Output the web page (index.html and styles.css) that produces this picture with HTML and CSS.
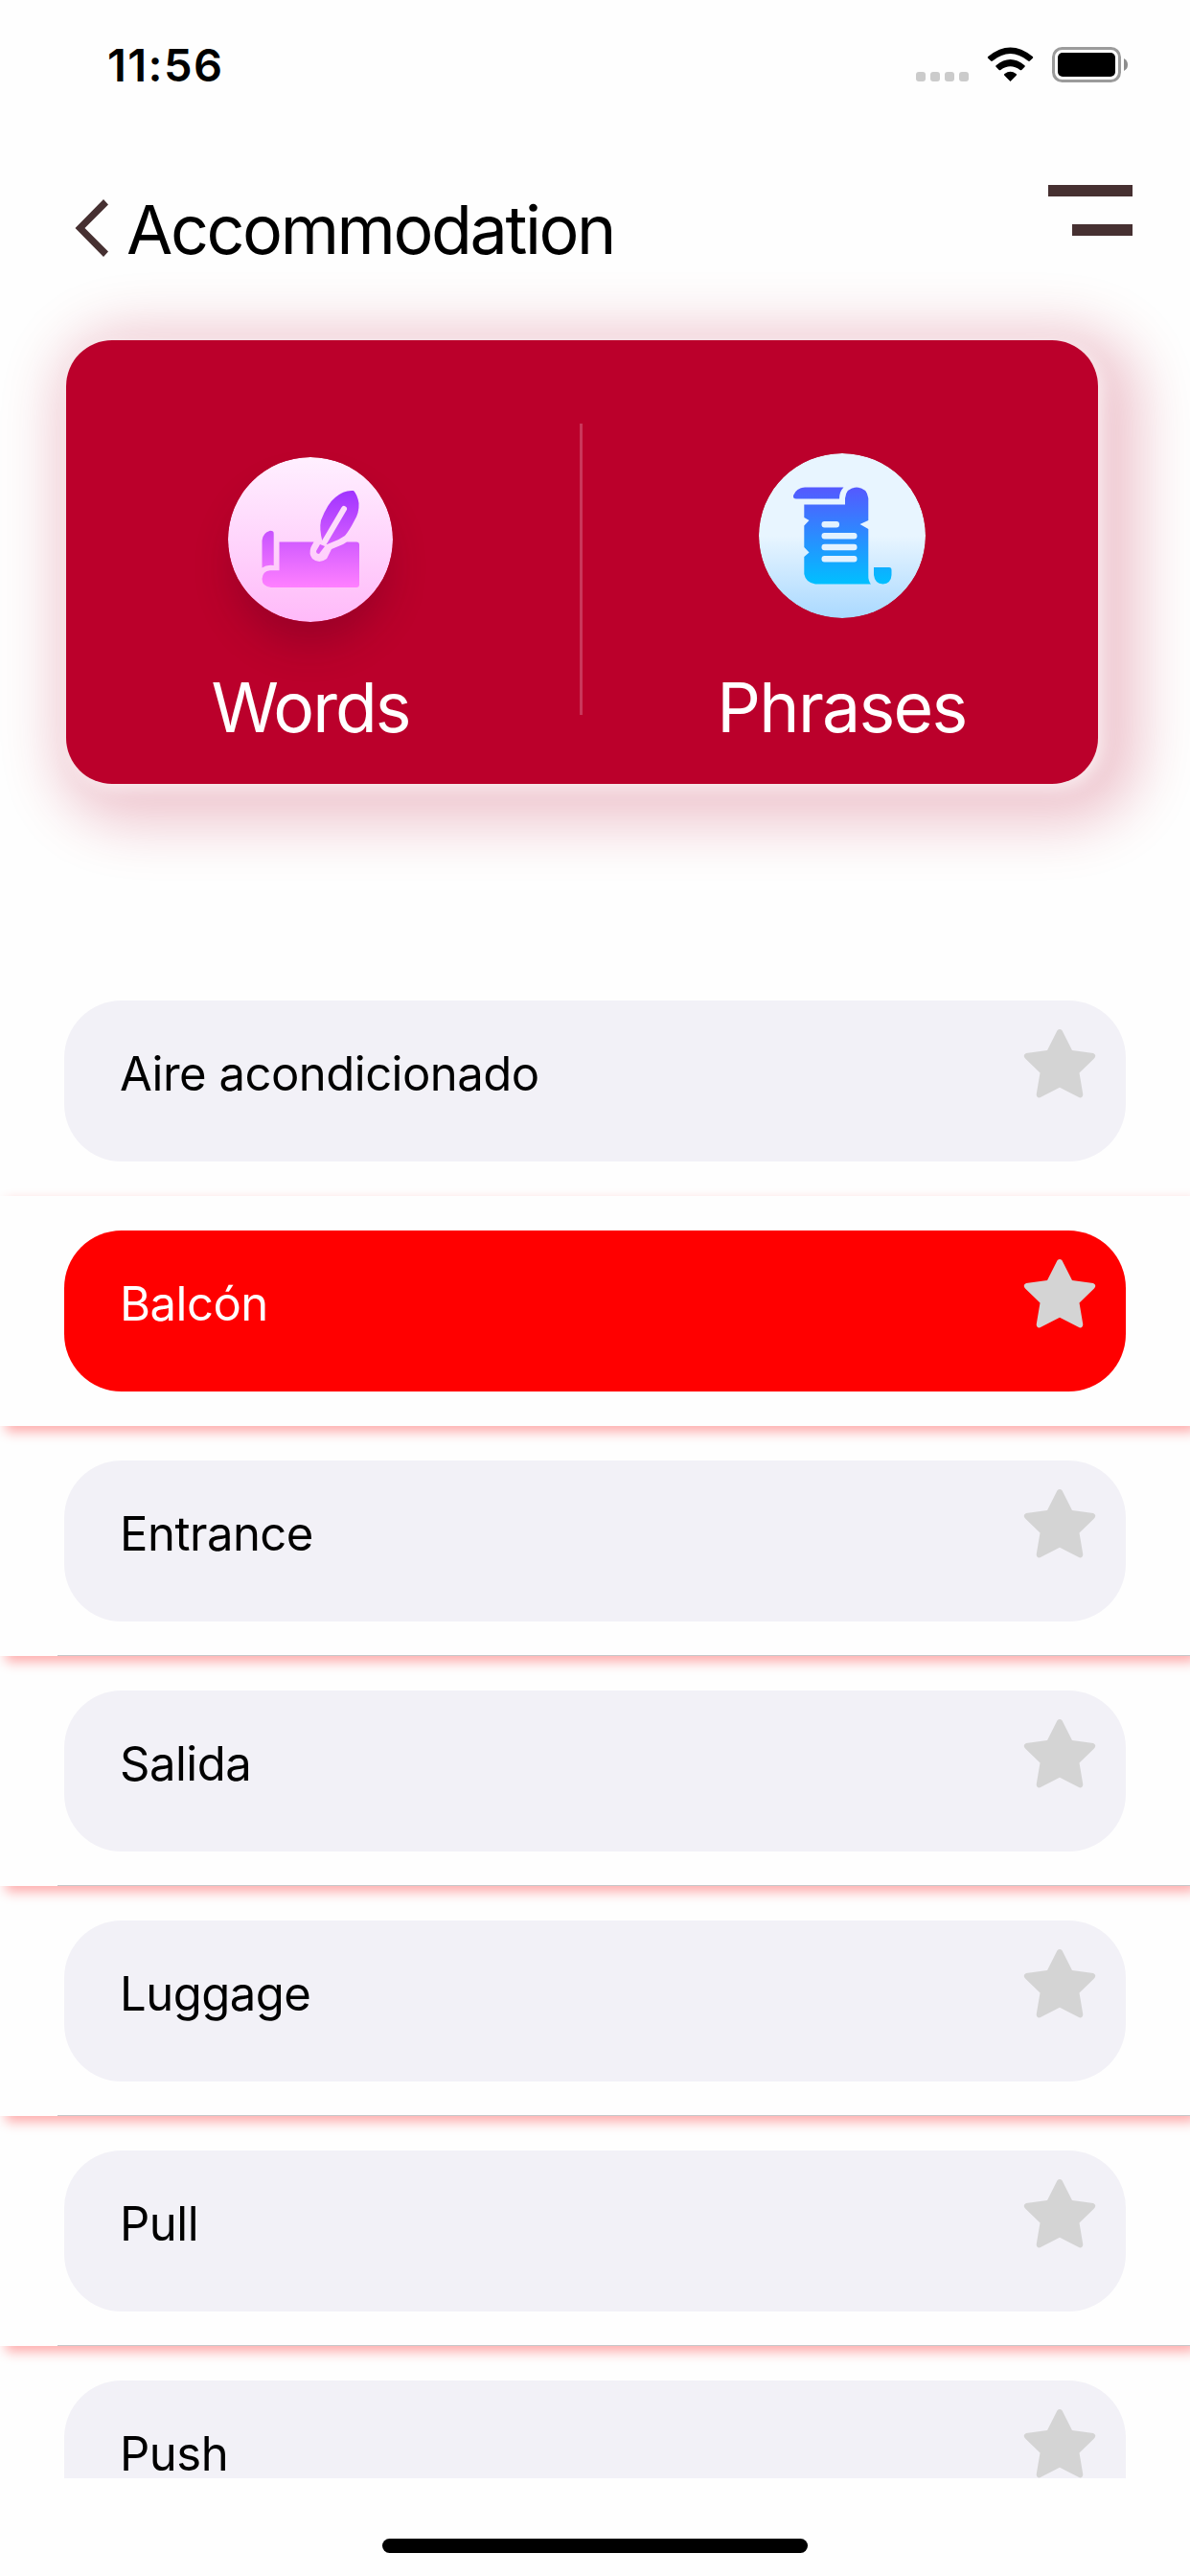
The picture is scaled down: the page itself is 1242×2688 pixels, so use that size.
FILE: index.html
```html
<!DOCTYPE html>
<html lang="en">
<head>
<meta charset="utf-8">
<title>Accommodation</title>
<link rel="stylesheet" href="styles.css">
</head>
<body>
<div class="screen">
  <header class="status">
    <span class="time">11:56</span>
    <svg class="status-icons" width="222" height="40" viewBox="0 0 222 40">
      <g fill="#cbcbcb"><rect x="0" y="26" width="10" height="10" rx="3"/><rect x="15" y="26" width="10" height="10" rx="3"/><rect x="30" y="26" width="10" height="10" rx="3"/><rect x="45" y="26" width="10" height="10" rx="3"/></g>
      <path d="M98.500 36.000L92.300 29.800Q91.300 28.800 92.500 28Q98.500 23.500 104.500 28Q105.700 28.800 104.700 29.800Z"/>
      <path d="M83.600 19.300Q98.500 6.800 113.400 19.300Q114.300 20 113.500 20.800L110.300 24Q109.500 24.700 108.600 24Q98.500 16.500 88.400 24Q87.500 24.700 86.700 24L83.500 20.800Q82.700 20 83.600 19.300Z"/>
      <path d="M75.600 9.700Q98.500 -8.900 121.400 9.700Q122.800 10.800 121.800 11.700L118.900 14.600Q118 15.400 117 14.500Q98.500 -.5 80 14.500Q79 15.400 78.100 14.600L75.200 11.700Q74.200 10.800 75.600 9.700Z"/>
      <rect x="143.500" y="1.500" width="69" height="34" rx="9" fill="none" stroke="#9b9b9b" stroke-width="3"/>
      <rect x="148" y="6" width="60" height="25" rx="5"/>
      <path d="M217 12Q221 14 221 18.500T217 25Z" fill="#8d8d8d"/>
    </svg>
  </header>
  <nav class="nav">
    <svg class="back" width="36" height="62" viewBox="0 0 36 62"><path d="M30 1L35 6.500L10.500 31L35 55.500L30 61L0.500 31Z" fill="#463031"/></svg>
    <h1 class="title">Accommodation</h1>
    <div class="menu"><span class="bar"></span><span class="bar short"></span></div>
  </nav>
  <section class="card">
    <div class="tab words">
      <svg class="disc shaded" width="172" height="172" viewBox="0 0 172 172">
        <defs>
          <linearGradient id="pinkDisc" x1="0" y1="0" x2="0" y2="1"><stop offset="0" stop-color="#fff0ff"/><stop offset="1" stop-color="#ffbaf9"/></linearGradient>
          <linearGradient id="pinkInk" gradientUnits="userSpaceOnUse" x1="0" y1="35" x2="0" y2="136"><stop offset="0" stop-color="#a033ff"/><stop offset="1" stop-color="#ff80ff"/></linearGradient>
        </defs>
        <circle cx="86" cy="86" r="86" fill="url(#pinkDisc)"/>
        <g fill="url(#pinkInk)">
          <path d="M35.500 115.500V87Q36 79 44 76.700Q48 76.700 47.700 80V113Q40 112 35.500 115.500Z"/>
          <path d="M53.500 88.500H89.500L86.500 94Q84 101 88 106Q95 112 103 106L108 96L120 91L124 88.500H134Q137 88.500 137 91.500V133Q137 136 134 136H45Q35.500 135 35.500 127Q36 119 44 118.300H53.500Z"/>
          <path d="M98.500 88Q95 75 97 66Q104 48 112 42Q121 34 131 35Q135 39 136.500 48Q137 58 132 66Q127 76 122 82Q115 87 107 89.500L103.500 91Z"/>
          <path d="M96 91L92 98Q92 101 95 101L101 93Z"/>
        </g>
        <path d="M121 54L101 88" stroke="#fddcfb" stroke-width="6" stroke-linecap="round"/>
      </svg>
      <span class="label">Words</span>
    </div>
    <span class="divider"></span>
    <div class="tab phrases">
      <svg class="disc" width="174" height="172" viewBox="0 0 174 172">
        <defs>
          <linearGradient id="blueDisc" x1="0" y1="0" x2="0" y2="1"><stop offset=".5" stop-color="#e8f5ff"/><stop offset="1" stop-color="#aad9ff"/></linearGradient>
          <linearGradient id="blueInk" gradientUnits="userSpaceOnUse" x1="0" y1="35" x2="0" y2="137"><stop offset="0" stop-color="#5558ff"/><stop offset="1" stop-color="#00c0ff"/></linearGradient>
        </defs>
        <ellipse cx="87" cy="86" rx="87" ry="86" fill="url(#blueDisc)"/>
        <g fill="url(#blueInk)">
          <path d="M48 35.500H88.500Q84 40 84 47.500H39Q35.500 47.500 36 44Q39 36 48 35.500Z"/>
          <path d="M90 53.500V47Q91 36 102 35.500Q113 36 114.300 47V70L105.500 74L114.300 79V127Q114 133 117 136.500H59Q49 135 47.300 126V108L52.500 103.500L47.300 98V75.500L52.500 70L47.300 67V53.500Z"/>
          <path d="M120 119H136Q138.500 119 138.500 122V127Q138 136 129.500 136.500Q121 136 120 127Z"/>
        </g>
        <g fill="#e3f2ff"><rect x="65.500" y="71" width="18.500" height="6.500" rx="3"/><rect x="65.500" y="83" width="37" height="6.500" rx="3"/><rect x="65.500" y="94.700" width="37" height="6.500" rx="3"/><rect x="65.500" y="107" width="37" height="6.500" rx="3"/></g>
      </svg>
      <span class="label">Phrases</span>
    </div>
  </section>
  <svg width="0" height="0" class="defs"><symbol id="star" viewBox="0 0 76 74"><path d="M35.500 2.300Q38 -.5 40.500 2.300L51 23L73 26Q77 28 74 31.500L58.500 46.500L62.300 69Q62 73 58.500 72.300L38 61.700L17.500 72.300Q14 73 13.700 69L17.500 46.500L2 31.500Q-1 28 3 26L25 23Z" fill="#d4d4d4"/></symbol></svg>
  <main class="list">
    <div class="row first"><div class="pill"><span>Aire acondicionado</span><svg class="star"><use href="#star"/></svg></div></div>
    <div class="row selected"><div class="pill"><span>Balcón</span><svg class="star"><use href="#star"/></svg></div></div>
    <div class="row r3"><div class="pill"><span>Entrance</span><svg class="star"><use href="#star"/></svg></div></div>
    <div class="row r4"><div class="pill"><span>Salida</span><svg class="star"><use href="#star"/></svg></div></div>
    <div class="row r5"><div class="pill"><span>Luggage</span><svg class="star"><use href="#star"/></svg></div></div>
    <div class="row r6"><div class="pill"><span>Pull</span><svg class="star"><use href="#star"/></svg></div></div>
    <div class="row r7"><div class="pill"><span>Push</span><svg class="star"><use href="#star"/></svg></div></div>
  </main>
  <footer class="home"><span class="home-bar"></span></footer>
</div>
</body>
</html>
```
FILE: styles.css
```css
* { box-sizing: border-box; }
body { margin: 0; background: #fefefe; font-family: Inter, "Liberation Sans", sans-serif; color: #000; }
.screen { width: 1242px; height: 2688px; overflow: hidden; display: flex; flex-direction: column; }
.status { height: 138px; padding: 39px 64px 0 112px; display: flex; justify-content: space-between; align-items: flex-start; }
.time { font-size: 47px; line-height: 57px; font-weight: 600; letter-spacing: 1.400px; }
.status-icons { margin-top: 10px; }
.nav { height: 217px; padding: 0 60px 0 78px; display: flex; align-items: flex-start; }
.back { margin-top: 69px; }
.title { margin: 59px 0 0 18px; font-size: 70px; line-height: 86px; font-weight: 400; letter-spacing: -2.400px; white-space: nowrap; }
.menu { margin: 55px 0 0 auto; display: flex; flex-direction: column; align-items: flex-end; gap: 29px; }
.bar { width: 88.500px; height: 12px; background: #463031; }
.short { width: 63px; }
.card { flex: none; width: 1077px; height: 463px; margin-left: 69px; border-radius: 48px; background: #bb002b; color: #fff; display: flex; box-shadow: 5px 5px 18px rgba(255, 255, 255, .7), 17px 15px 60px 26px rgba(187, 0, 43, .23); }
.tab { display: flex; flex-direction: column; align-items: center; flex: none; }
.words { width: 510px; margin-right: 26px; padding-top: 122px; }
.phrases { width: 486px; margin-left: -1px; padding: 118px 0 0 57px; }
.divider { width: 3px; height: 304px; margin-top: 87px; background: #c9375a; }
.disc { flex: none; display: block; border-radius: 50%; }
.shaded { box-shadow: 0 28px 40px -6px rgba(60, 0, 30, .25); }
.label { font-size: 71.500px; line-height: 86px; letter-spacing: -2px; margin-top: 46px; }
.phrases .label { margin-top: 50px; letter-spacing: -1.700px; }
.defs { display: none; }
.list { flex: none; height: 1578px; margin-top: 190px; overflow: hidden; }
.row { height: 240px; padding: 36px 67px; position: relative; background: #fefefe; box-shadow: 6px 6px 12px rgba(255, 0, 0, .33); }
.first { z-index: 1; box-shadow: none; }
.selected { z-index: 9; }
.r3 { z-index: 8; }
.r4 { z-index: 7; }
.r5 { z-index: 6; }
.r6 { z-index: 5; }
.r7 { z-index: 4; }
.r3, .r4, .r5, .r6 { background: linear-gradient(#c6c6c8, #c6c6c8) 60px 239px / 1182px 1px no-repeat #fefefe; }
.pill { height: 168px; border-radius: 60px; background: #f2f1f7; padding: 29px 31px 0 58px; display: flex; justify-content: space-between; align-items: flex-start; }
.pill span { margin-top: 24px; font-size: 49px; line-height: 48px; letter-spacing: -.5px; white-space: nowrap; }
.selected .pill { background: #f00; color: #fff; }
.star { width: 76px; height: 74px; flex: none; }
.home { flex: 1; display: flex; justify-content: center; padding-top: 63px; }
.home-bar { width: 444px; height: 15px; border-radius: 8px; background: #000; }
```
